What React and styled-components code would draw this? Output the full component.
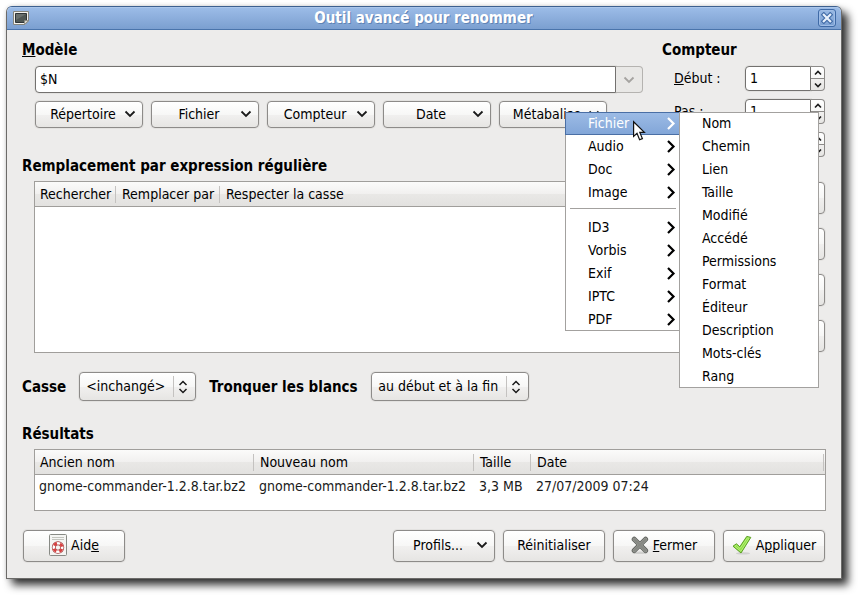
import React from "react";
import styled, { createGlobalStyle, css } from "styled-components";

const GlobalStyle = createGlobalStyle`
  * { box-sizing: border-box; }
  body {
    margin: 0;
    padding: 6px 20px 20px 6px;
    background: #fff;
    color: #000;
    font: 14px/18px "DejaVu Sans Condensed", "DejaVu Sans", sans-serif;
  }
  button, input, select { font: inherit; color: inherit; margin: 0; }
`;

const face = css`
  border: 1px solid #8d8b89;
  border-radius: 4px;
  background: linear-gradient(#fff 0%, #f7f7f6 50%, #f1f0ef 51%, #e6e5e3 100%);
  box-shadow: 0 0 0 1px #e3e2e0;
`;

const Window = styled.main`
  border: 1px solid #6c6b69;
  border-top-color: #3d608f;
  border-radius: 6px 6px 0 0;
  background: #edeceb;
  box-shadow: 0 0 4px rgba(0, 0, 0, 0.15), 6px 6px 8px rgba(0, 0, 0, 0.8);
`;

const TitleBar = styled.header`
  display: flex;
  align-items: center;
  height: 23px;
  padding: 0 5px 0 6px;
  border-bottom: 1px solid #4a74ab;
  border-radius: 5px 5px 0 0;
  background: linear-gradient(#9dbde8, #7b9fd0);
  box-shadow: inset 0 1px #abc6ea;
`;

const Title = styled.h1`
  flex: 1;
  margin: 0;
  font-size: 15px;
  line-height: 18px;
  text-align: center;
  color: #fff;
  text-shadow: 1px 1px #5f84b5;
`;

const CloseButton = styled.button`
  display: flex;
  align-items: center;
  justify-content: center;
  width: 18px;
  height: 18px;
  padding: 0;
  border: 1px solid #3f6aa6;
  border-radius: 3px;
  background: linear-gradient(#98b9e4, #7a9fd1);
  box-shadow: inset 0 0 0 1px #9fbde6;
`;

const Content = styled.form`
  display: flex;
  flex-direction: column;
  padding: 11px 15px 16px;
`;

const Top = styled.div`
  display: grid;
  grid-template-columns: 1fr 164px;
  column-gap: 19px;
`;

const Heading = styled.h2`
  margin: 0;
  font-size: 15px;
  line-height: 18px;
`;

const HeadLabel = styled.label`
  min-width: ${(p) => p.$w}px;
  font-size: 15px;
  font-weight: bold;
  white-space: nowrap;
`;

const Template = styled.div`
  display: flex;
  flex-direction: column;
  gap: 8px;
  padding: 7px 0 0 13px;
`;

const Combo = styled.div`
  display: flex;
  height: 27px;
`;

const TextInput = styled.input`
  flex: 1;
  min-width: 0;
  padding: 0 4px 2px;
  border: 1px solid #73716f;
  border-radius: 4px 0 0 4px;
  background: #fff;
  box-shadow: 0 0 0 1px #e3e2e0;
  outline: none;
`;

const ComboButton = styled.button`
  display: flex;
  align-items: center;
  justify-content: center;
  width: 27px;
  padding: 0;
  border: 1px solid #b5b3b0;
  border-left: 0;
  border-radius: 0 4px 4px 0;
  background: #e9e8e6;
`;

const ButtonRow = styled.div`
  display: flex;
  gap: 8px;
`;

const Anchor = styled.div`
  position: relative;
`;

const MenuButton = styled.button`
  ${face}
  display: flex;
  align-items: center;
  width: 108px;
  height: 27px;
  padding: 0 6px 2px;
  span { flex: 1; text-align: center; }
`;

const Menu = styled.ul`
  position: absolute;
  z-index: ${(p) => (p.$sub ? 2 : 1)};
  left: ${(p) => (p.$sub ? 114 : 66)}px;
  top: ${(p) => (p.$sub ? 0 : 11)}px;
  width: ${(p) => (p.$sub ? 140 : 115)}px;
  margin: 0;
  padding: 0;
  list-style: none;
  background: #fff;
  box-shadow: inset 0 0 0 1px #a3a19f;
`;

const MenuItem = styled.li`
  display: flex;
  align-items: center;
  justify-content: space-between;
  height: 23px;
  padding: 0 4px 2px 23px;
  ${(p) =>
    p.$active &&
    css`
      color: #fff;
      border: 1px solid #4a6fa5;
      padding: 0 3px 2px 22px;
      background: linear-gradient(#9cbbe5, #82a6d8);
    `}
`;

const MenuRule = styled.li`
  height: 1px;
  margin: 4px 4px 7px 5px;
  background: #a3a19f;
`;

const Pointer = styled.svg`
  position: absolute;
  z-index: 3;
  left: 67px;
  top: 8px;
`;

const Counter = styled.div`
  display: grid;
  grid-template-columns: 71px 80px;
  row-gap: 8px;
  padding: 7px 0 0 12px;
  label { padding-top: 3px; }
`;

const Spin = styled.div`
  display: flex;
  grid-column: 2;
  height: 25px;
`;

const SpinArrows = styled.div`
  ${face}
  display: flex;
  flex-direction: column;
  width: 14px;
  border-left: 0;
  border-radius: 0 4px 4px 0;
  box-shadow: none;
`;

const SpinButton = styled.button`
  display: flex;
  flex: 1;
  align-items: center;
  justify-content: center;
  padding: 0;
  border: 0;
  background: none;
  & + & { border-top: 1px solid #8d8b89; }
`;

const Regex = styled.div`
  display: grid;
  grid-template-columns: 1fr 102px;
  column-gap: 12px;
  padding: 6px 1px 0 12px;
`;

const ButtonStack = styled.div`
  display: flex;
  flex-direction: column;
  gap: 14px;
  padding-top: 1px;
`;

const Button = styled.button`
  ${face}
  display: flex;
  align-items: center;
  justify-content: center;
  gap: 4px;
  width: 102px;
  height: 32px;
  padding: 0 4px 2px;
  white-space: nowrap;
`;

const MenuButtonLarge = styled(MenuButton)`
  width: 102px;
  height: 32px;
`;

const TableFrame = styled.div`
  min-height: ${(p) => p.$min}px;
  border: 1px solid #a09e9b;
  background: #fff;
`;

const Table = styled.table`
  width: 100%;
  border-collapse: separate;
  border-spacing: 0;
  table-layout: fixed;
  white-space: nowrap;
`;

const Th = styled.th`
  width: ${(p) => (p.$w ? p.$w + "px" : "auto")};
  height: 25px;
  padding: 0 0 0 5px;
  border-bottom: 1px solid #a09e9b;
  font-weight: normal;
  text-align: left;
  background:
    linear-gradient(#c4c2c0, #c4c2c0) right 1px center / 1px 17px no-repeat,
    linear-gradient(#fbfbfa 0%, #f1f0ef 50%, #e9e8e6 51%, #e3e2e0 100%);
`;

const Td = styled.td`
  height: 23px;
  padding: 0 0 1px 4px;
  color: #1a1a1a;
`;

const Options = styled.div`
  display: flex;
  align-items: center;
  gap: 13px;
  padding: 19px 0 24px;
`;

const SelectBox = styled.div`
  ${face}
  display: flex;
  align-items: center;
  position: relative;
  height: 29px;
  svg { position: absolute; right: 7px; pointer-events: none; }
`;

const Select = styled.select`
  width: ${(p) => p.$w}px;
  height: 27px;
  padding: 0 0 2px 6px;
  border: 0;
  appearance: none;
  background: linear-gradient(#c4c2c0, #c4c2c0) right 21px center / 1px 21px no-repeat;
  outline: none;
`;

const Results = styled.div`
  padding: 6px 0 0 12px;
`;

const Footer = styled.footer`
  display: flex;
  gap: 8px;
  padding: 19px 1px 0;
  ${Button}:first-child { margin-right: auto; }
`;

const Chevron = ({ color = "#1a1a1a" }) => (
  <svg width="12" height="8" viewBox="0 0 12 8" aria-hidden="true">
    <path d="M1.5 1.5 L6 6 L10.5 1.5" fill="none" stroke={color} strokeWidth="1.8" />
  </svg>
);

const ChevronRight = ({ color = "#000" }) => (
  <svg width="10" height="14" viewBox="0 0 10 14" aria-hidden="true">
    <path d="M2 2 L7.5 7.5 L2 13" fill="none" stroke={color} strokeWidth="2.2" />
  </svg>
);

const SmallArrow = ({ up }) => (
  <svg width="8" height="6" viewBox="0 0 8 6" aria-hidden="true">
    <path d={up ? "M1 4.5 L4 1.5 L7 4.5" : "M1 1.5 L4 4.5 L7 1.5"} fill="none" stroke="#1a1a1a" strokeWidth="1.6" />
  </svg>
);

const UpDown = () => (
  <svg width="10" height="14" viewBox="0 0 10 14" aria-hidden="true">
    <path d="M1.5 5 L5 1.5 L8.5 5 M1.5 9 L5 12.5 L8.5 9" fill="none" stroke="#1a1a1a" strokeWidth="1.5" />
  </svg>
);

const WindowIcon = () => (
  <svg width="16" height="14" viewBox="0 0 16 14" aria-hidden="true">
    <path d="M.5 .5 H15.5 V10 L12 13.5 H.5 Z" fill="#f4f3ef" stroke="#85857c" />
    <path d="M2.5 2.5 H13.5 V9 L11 11.5 H2.5 Z" fill="#4f5754" stroke="#2e3436" />
    <path d="M3 3 H13 L3 9 Z" fill="#69706d" />
    <path d="M11.5 13.5 V9.5 H15.5 Z" fill="#d9d8cf" stroke="#85857c" strokeWidth=".8" />
  </svg>
);

const CloseIcon = () => (
  <svg width="12" height="12" viewBox="0 0 12 12" aria-hidden="true">
    <path d="M2.8 2.8 L9.2 9.2 M9.2 2.8 L2.8 9.2" stroke="#3f6aa6" strokeWidth="4.4" strokeLinecap="square" />
    <path d="M2.8 2.8 L9.2 9.2 M9.2 2.8 L2.8 9.2" stroke="#e8f1fc" strokeWidth="2.2" strokeLinecap="square" />
  </svg>
);

const HelpIcon = () => (
  <svg width="18" height="22" viewBox="0 0 18 22" aria-hidden="true">
    <rect x=".5" y=".5" width="17" height="21" rx="1" fill="#f5f5f3" stroke="#888a85" />
    <path d="M3 3.5 H15 M3 5.5 H15" stroke="#c3c4be" />
    <circle cx="9" cy="13.5" r="4.2" fill="none" stroke="#a04040" strokeWidth="4" />
    <circle cx="9" cy="13.5" r="4.2" fill="none" stroke="#fff" strokeWidth="2.6" />
    <circle cx="9" cy="13.5" r="4.2" fill="none" stroke="#d84040" strokeWidth="2.8" strokeDasharray="3.3 3.3" strokeDashoffset="-1.65" />
  </svg>
);

const CrossIcon = () => (
  <svg width="18" height="18" viewBox="0 0 18 18" aria-hidden="true">
    <ellipse cx="9" cy="16.8" rx="8" ry="1.2" fill="#d0d0ce" />
    <path d="M3.2 3.2 L14.6 14.6 M14.6 3.2 L3.2 14.6" stroke="#5e605c" strokeWidth="5" strokeLinecap="round" />
    <path d="M3.2 3.2 L14.6 14.6 M14.6 3.2 L3.2 14.6" stroke="#999b96" strokeWidth="3.4" strokeLinecap="round" />
    <path d="M3.2 3.2 L14.6 14.6 M14.6 3.2 L3.2 14.6" stroke="#868883" strokeWidth="2" strokeLinecap="round" />
  </svg>
);

const CheckIcon = () => (
  <svg width="20" height="20" viewBox="0 0 20 20" aria-hidden="true">
    <ellipse cx="11" cy="18.4" rx="7" ry="1.2" fill="#d0d0ce" />
    <path d="M1 11.2 L4.4 8.8 L7.8 11.8 L14.8 1.4 L18.8 2.4 L9 18 Z" fill="#8fdf45" stroke="#5a9e22" strokeLinejoin="round" />
    <path d="M2.8 11.4 L4.3 10.2 L8 13.6 L15.4 2.8 L17 3.2 L8.9 16.2 Z" fill="none" stroke="#b9f07f" strokeWidth=".9" />
  </svg>
);

const tokens = ["Répertoire", "Fichier", "Compteur", "Date", "Métabalise"];
const groups = [["Fichier", "Audio", "Doc", "Image"], ["ID3", "Vorbis", "Exif", "IPTC", "PDF"]];
const fields = ["Nom", "Chemin", "Lien", "Taille", "Modifié", "Accédé", "Permissions", "Format", "Éditeur", "Description", "Mots-clés", "Rang"];

const Spinner = ({ id, label }) => (
  <Spin>
    <TextInput id={id} defaultValue="1" aria-label={label} />
    <SpinArrows>
      <SpinButton type="button" aria-label="Augmenter"><SmallArrow up /></SpinButton>
      <SpinButton type="button" aria-label="Diminuer"><SmallArrow /></SpinButton>
    </SpinArrows>
  </Spin>
);

const TagMenu = () => (
  <Menu role="menu">
    {groups.map((group, g) => (
      <React.Fragment key={g}>
        {g > 0 && <MenuRule role="separator" />}
        {group.map((name, i) => (
          <MenuItem key={name} role="menuitem" $active={g === 0 && i === 0}>
            {name}
            <ChevronRight color={g === 0 && i === 0 ? "#fff" : "#000"} />
          </MenuItem>
        ))}
      </React.Fragment>
    ))}
    <Menu as="ul" role="menu" $sub>
      {fields.map((name) => <MenuItem key={name} role="menuitem">{name}</MenuItem>)}
    </Menu>
    <Pointer width="14" height="22" viewBox="0 0 14 22" aria-hidden="true">
      <path d="M1.6 1.8 V16.4 L5 13.2 L7.6 19.8 L10.4 18.6 L7.8 12.4 H12.4 Z" fill="#fff" stroke="#111" strokeWidth="1.2" />
    </Pointer>
  </Menu>
);

export default function App() {
  return (
    <>
      <GlobalStyle />
      <Window>
        <TitleBar>
          <WindowIcon />
          <Title>Outil avancé pour renommer</Title>
          <CloseButton type="button" aria-label="Fermer la fenêtre"><CloseIcon /></CloseButton>
        </TitleBar>
        <Content onSubmit={(e) => e.preventDefault()}>
          <Top>
            <section>
              <Heading><label htmlFor="template"><u>M</u>odèle</label></Heading>
              <Template>
                <Combo>
                  <TextInput id="template" defaultValue="$N" />
                  <ComboButton type="button" aria-label="Historique"><Chevron color="#a5a3a0" /></ComboButton>
                </Combo>
                <ButtonRow>
                  {tokens.map((name) => (
                    <Anchor key={name}>
                      <MenuButton type="button"><span>{name}</span><Chevron /></MenuButton>
                      {name === "Métabalise" && <TagMenu />}
                    </Anchor>
                  ))}
                </ButtonRow>
              </Template>
            </section>
            <section>
              <Heading>Compteur</Heading>
              <Counter>
                <label htmlFor="start"><u>D</u>ébut :</label>
                <Spinner id="start" />
                <label htmlFor="step"><u>P</u>as :</label>
                <Spinner id="step" />
                <Spinner id="digits" label="Chiffres" />
              </Counter>
            </section>
          </Top>
          <Heading>Remplacement par expression régulière</Heading>
          <Regex>
            <TableFrame $min={172}>
              <Table>
                <thead>
                  <tr><Th $w={82}>Rechercher</Th><Th $w={104}>Remplacer par</Th><Th>Respecter la casse</Th></tr>
                </thead>
              </Table>
            </TableFrame>
            <ButtonStack>
              <Button type="button" aria-label="Ajouter" />
              <Button type="button" aria-label="Modifier" />
              <Button type="button" aria-label="Supprimer" />
              <Button type="button" aria-label="Tout supprimer" />
            </ButtonStack>
          </Regex>
          <Options>
            <HeadLabel htmlFor="case" $w={44}>Casse</HeadLabel>
            <SelectBox>
              <Select id="case" $w={115}><option>&lt;inchangé&gt;</option></Select>
              <UpDown />
            </SelectBox>
            <HeadLabel htmlFor="trim" $w={149}>Tronquer les blancs</HeadLabel>
            <SelectBox>
              <Select id="trim" $w={156}><option>au début et à la fin</option></Select>
              <UpDown />
            </SelectBox>
          </Options>
          <Heading>Résultats</Heading>
          <Results>
            <TableFrame $min={62}>
              <Table>
                <thead>
                  <tr><Th $w={220}>Ancien nom</Th><Th $w={220}>Nouveau nom</Th><Th $w={57}>Taille</Th><Th>Date</Th></tr>
                </thead>
                <tbody>
                  <tr>
                    <Td>gnome-commander-1.2.8.tar.bz2</Td>
                    <Td>gnome-commander-1.2.8.tar.bz2</Td>
                    <Td>3,3 MB</Td>
                    <Td>27/07/2009 07:24</Td>
                  </tr>
                </tbody>
              </Table>
            </TableFrame>
          </Results>
          <Footer>
            <Button type="button"><HelpIcon /><span>Aid<u>e</u></span></Button>
            <MenuButtonLarge type="button"><span>Profils...</span><Chevron /></MenuButtonLarge>
            <Button type="button">Réinitialiser</Button>
            <Button type="button"><CrossIcon /><span><u>F</u>ermer</span></Button>
            <Button type="submit"><CheckIcon /><span>A<u>p</u>pliquer</span></Button>
          </Footer>
        </Content>
      </Window>
    </>
  );
}
